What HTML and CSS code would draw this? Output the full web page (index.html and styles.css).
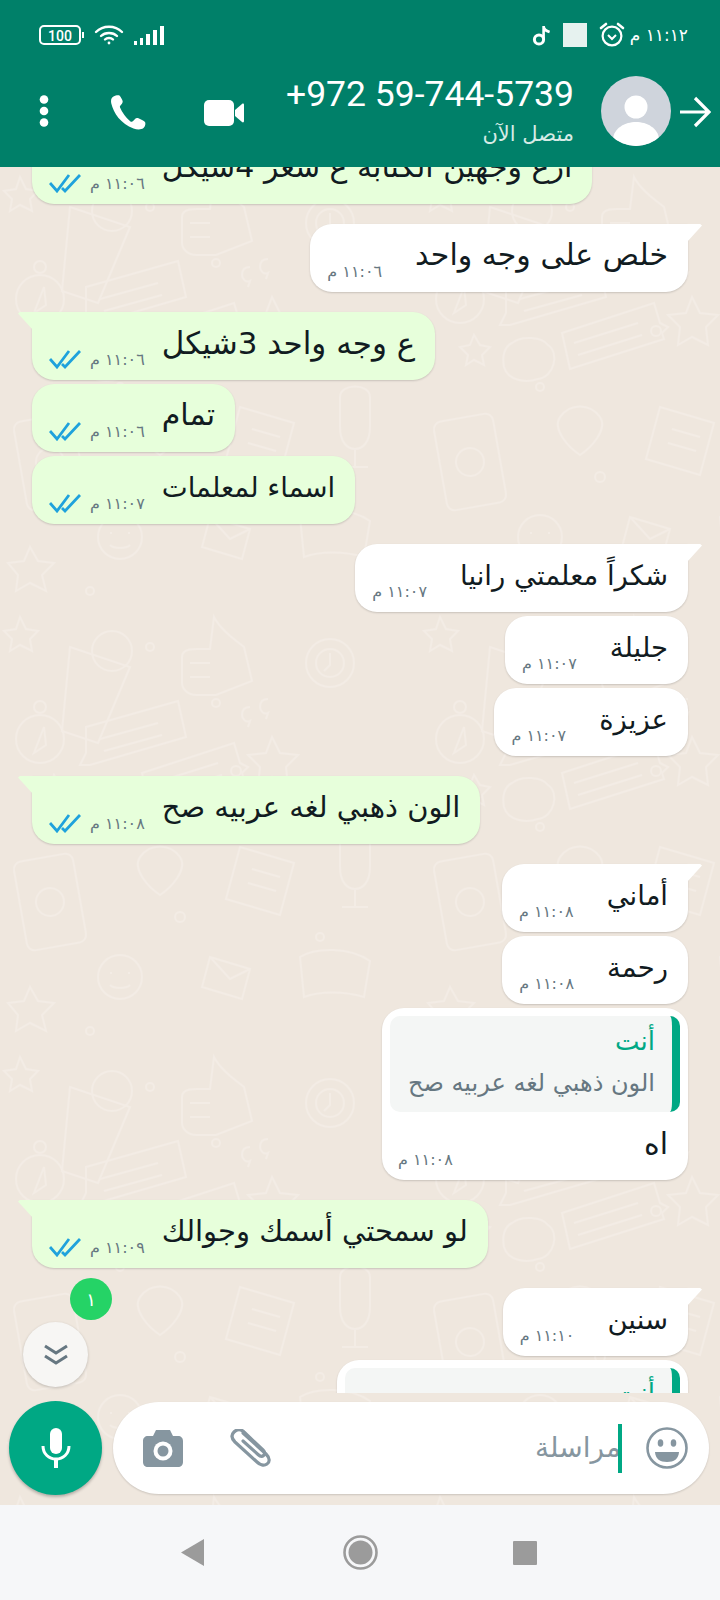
FILE: index.html
```html
<!DOCTYPE html>
<html lang="ar">
<head>
  <meta charset="UTF-8" />
  <meta name="viewport" content="width=device-width, initial-scale=1" />
  <title>WhatsApp chat</title>
  <link rel="stylesheet" href="styles.css">
</head>
<body>
  <div class="header">
    <div class="status-bar">
      <div class="status-left">
        <svg width="46" height="20" viewBox="0 0 46 20">
          <rect x="1" y="1" width="40" height="18" rx="4" fill="none" stroke="#fff" stroke-width="2" />
          <rect x="43" y="7" width="2" height="6" fill="#fff" />
          <text x="21" y="15.5" text-anchor="middle" class="battery-text">100</text>
        </svg>
        <svg width="30" height="21" viewBox="0 0 30 21" fill="none" stroke="#fff" stroke-width="2.4" stroke-linecap="round">
          <path d="M2 8c7-7 19-7 26 0" />
          <path d="M7 12c4-4 12-4 16 0" />
          <path d="M11 15.5c2-2 6-2 8 0" />
          <circle cx="15" cy="19" r="1.4" fill="#fff" stroke="none" />
        </svg>
        <svg class="icon-signal" width="30" height="20" viewBox="0 0 30 20" fill="#fff">
          <rect x="0" y="16" width="3" height="4" />
          <rect x="6" y="13" width="3" height="7" />
          <rect x="12" y="9" width="4" height="11" />
          <rect x="19" y="5" width="4" height="15" />
          <rect x="26" y="1" width="4" height="19" />
        </svg>
      </div>
      <div class="status-right">
        <svg width="19" height="22" viewBox="0 0 19 22" fill="none" stroke="#fff" stroke-width="3">
          <circle cx="7" cy="15.5" r="4.6" />
          <path d="M11.6 15V2c0 4 3 5 6 6" stroke-width="2.6" />
        </svg>
        <span class="status-square"></span>
        <svg width="26" height="25" viewBox="0 0 26 25" fill="none" stroke="#fff" stroke-width="2.2">
          <circle cx="13" cy="14" r="9.4" />
          <path d="M9 13l4 4 4-4" stroke-width="2" />
          <path d="M2 6l5-4M24 6l-5-4" stroke-linecap="round" stroke-width="2.6" />
        </svg>
        <span class="status-time" dir="rtl">١١:١٢ م</span>
      </div>
    </div>

    <div class="app-bar">
      <div class="app-actions">
        <svg class="icon-dots" width="12" height="32" viewBox="0 0 12 32" fill="#fff">
          <circle cx="6" cy="4.5" r="4.3" />
          <circle cx="6" cy="16" r="4.3" />
          <circle cx="6" cy="27.5" r="4.3" />
        </svg>
        <svg class="icon-phone" width="36" height="35" viewBox="0 0 36 35" fill="#fff">
          <path d="M3.500 1.500C1.500 2.500.5 5 1.300 8.500 3.500 18 11 29 23.500 33.500c3.500 1.200 7.500 1.500 10-.5 2-1.600 2.200-4.500 1.500-6-.4-1-4-2.800-6.500-3.800-1.500-.6-2.800-.2-3.700 1-.8 1-1.500 1.800-2.400 2.300-.7.400-1.500.3-2.200-.3C16 23 11.800 16.500 10 12.500c-.3-.9-.1-1.600.7-2.300 1-1 1.700-2 2-3.200.3-1.300-1.800-5-3-6.300C8.800-.3 5.500.3 3.500 1.500z" />
        </svg>
        <svg class="icon-video" width="40" height="26" viewBox="0 0 40 26" fill="#fff">
          <rect x="0" y="0" width="30" height="26" rx="5" />
          <path d="M31 10l7-6c1-.8 2-.3 2 1v16c0 1.300-1 1.800-2 1l-7-6z" />
        </svg>
      </div>
      <div class="contact">
        <div class="contact-name">+972 59-744-5739</div>
        <div class="contact-status" dir="rtl">متصل الآن</div>
      </div>
      <div class="avatar">
        <svg width="70" height="70" viewBox="0 0 70 70" fill="#fff">
          <circle cx="35" cy="31" r="11.500" />
          <path d="M12 63c1-11 12-17 23-17s22 6 23 17c-6 5-14 7-23 7s-17-2-23-7z" />
        </svg>
      </div>
      <svg class="icon-back" width="32" height="32" viewBox="0 0 32 32" fill="none" stroke="#fff" stroke-width="3.200">
        <path d="M1 16h29M16 2l14 14-14 14" />
      </svg>
    </div>
  </div>

  <div class="chat">
    <!-- faint doodle wallpaper -->
    <svg class="wallpaper" width="720" height="1338">
      <defs>
        <pattern id="doodles" width="420" height="440" patternUnits="userSpaceOnUse">
          <g fill="none" stroke="#f3ece5" stroke-width="2">
            <!-- glass and lemon -->
            <path d="M70 40l60 20-32 76-36-12z" />
            <circle cx="112" cy="44" r="20" />
            <!-- thumb -->
            <path d="M214 10c6 12 20 22 30 30l8 34-36 14h-20c-8 0-14-6-14-12V50c0-6 6-8 14-8h14z" />
            <path d="M190 56h20M190 70h20" />
            <!-- chat bubbles -->
            <path d="M86 110l92-26 8 36-96 28-10 0 6-12z" transform="translate(0 10)" />
            <path d="M100 122l58-16M104 134l58-16" transform="translate(0 10)" />
            <path d="M142 166l92-30 6 20 8 4-6 6 2 6-94 30z" />
            <path d="M154 176l64-20M158 188l64-20" />
            <!-- compass -->
            <circle cx="40" cy="132" r="24" />
            <circle cx="40" cy="100" r="6" />
            <path d="M44 120l-10 26 12-8z" />
            <!-- stars -->
            <path d="M272 130l8 16 18 2-12 12 2 18-16-8-14 8 2-18-12-12 18-2z" />
            <path d="M20 10l6 12 12 2-8 8 2 12-12-6-10 6 2-12-8-8 12-2z" />
            <path d="M54 168l6 10 10 2-8 8 2 10-10-5-8 5 2-10-8-8 10-2z" />
            <!-- cloud -->
            <path d="M92 176c10-8 30-6 36 2 12 8 6 32-10 34-12 4-30 2-34-12-2-10 0-20 8-24z" />
            <!-- clock -->
            <circle cx="330" cy="56" r="24" />
            <circle cx="330" cy="56" r="14" />
            <path d="M330 46v12l-6 6" />
            <!-- quotes and dots -->
            <path d="M250 100c-6 0-8 4-8 8s4 8 8 6l-2 6M268 92c-6 0-8 4-8 8s4 8 8 6l-2 6" />
            <circle cx="150" cy="40" r="4" />
            <circle cx="216" cy="96" r="4" />
            <circle cx="236" cy="164" r="5" />
            <circle cx="120" cy="220" r="4" />
            <!-- second row -->
            <rect x="20" y="250" width="60" height="90" rx="8" transform="rotate(-10 50 295)" />
            <circle cx="50" cy="295" r="14" transform="rotate(-10 50 295)" />
            <path d="M140 250c10-14 30-14 40 0 8 12-8 30-20 38-12-8-28-26-20-38z" />
            <path d="M240 240l54 16-14 52-54-16z" />
            <path d="M252 262l28 8M248 276l28 8" />
            <path d="M340 230c0-14 30-14 30 0v30c0 16-8 22-15 22s-15-6-15-22zM355 282v18M342 300h26" />
            <circle cx="120" cy="370" r="22" />
            <path d="M110 366h2M128 366h2M110 378c4 4 16 4 20 0" />
            <path d="M210 350l40 12-8 30-40-12zM210 350l20 22 20-10" />
            <path d="M300 350c16-10 50-10 70 4l-6 36c-20-6-44-6-60 0z" />
            <path d="M30 380l8 14 16 2-12 12 4 16-16-8-14 8 2-16-10-12 16-2z" />
            <circle cx="180" cy="310" r="5" />
            <circle cx="320" cy="330" r="4" />
            <circle cx="90" cy="424" r="4" />
          </g>
        </pattern>
      </defs>
      <rect width="720" height="1338" fill="url(#doodles)" />
    </svg>

    <div class="messages" dir="rtl">
      <div class="msg out msg-cut">
        <div class="msg-text">ارع وجهين الكتابه ع سعر 4شيكل</div>
        <div class="meta"><span>١١:٠٦ م</span><svg class="ticks" width="32" height="20" viewBox="0 0 32 20"><path d="M1 10l7 8L20 2M13 15l3 3L31 2" /></svg></div>
      </div>

      <div class="msg in tail group">
        <div class="msg-text">خلص على وجه واحد</div>
        <div class="meta"><span>١١:٠٦ م</span></div>
      </div>

      <div class="msg out tail group">
        <div class="msg-text large">ع وجه واحد 3شيكل</div>
        <div class="meta"><span>١١:٠٦ م</span><svg class="ticks" width="32" height="20" viewBox="0 0 32 20"><path d="M1 10l7 8L20 2M13 15l3 3L31 2" /></svg></div>
      </div>
      <div class="msg out">
        <div class="msg-text">تمام</div>
        <div class="meta"><span>١١:٠٦ م</span><svg class="ticks" width="32" height="20" viewBox="0 0 32 20"><path d="M1 10l7 8L20 2M13 15l3 3L31 2" /></svg></div>
      </div>
      <div class="msg out">
        <div class="msg-text small">اسماء لمعلمات</div>
        <div class="meta"><span>١١:٠٧ م</span><svg class="ticks" width="32" height="20" viewBox="0 0 32 20"><path d="M1 10l7 8L20 2M13 15l3 3L31 2" /></svg></div>
      </div>

      <div class="msg in tail group">
        <div class="msg-text small">شكراً معلمتي رانيا</div>
        <div class="meta"><span>١١:٠٧ م</span></div>
      </div>
      <div class="msg in">
        <div class="msg-text small">جليلة</div>
        <div class="meta"><span>١١:٠٧ م</span></div>
      </div>
      <div class="msg in">
        <div class="msg-text small">عزيزة</div>
        <div class="meta"><span>١١:٠٧ م</span></div>
      </div>

      <div class="msg out tail group">
        <div class="msg-text medium">الون ذهبي لغه عربيه صح</div>
        <div class="meta"><span>١١:٠٨ م</span><svg class="ticks" width="32" height="20" viewBox="0 0 32 20"><path d="M1 10l7 8L20 2M13 15l3 3L31 2" /></svg></div>
      </div>

      <div class="msg in tail group">
        <div class="msg-text small">أماني</div>
        <div class="meta"><span>١١:٠٨ م</span></div>
      </div>
      <div class="msg in">
        <div class="msg-text small">رحمة</div>
        <div class="meta"><span>١١:٠٨ م</span></div>
      </div>
      <div class="msg in msg-reply">
        <div class="quote">
          <div class="quote-name">أنت</div>
          <div class="quote-text">الون ذهبي لغه عربيه صح</div>
        </div>
        <div class="reply-text">اه</div>
        <div class="meta"><span>١١:٠٨ م</span></div>
      </div>

      <div class="msg out tail group">
        <div class="msg-text medium">لو سمحتي أسمك وجوالك</div>
        <div class="meta"><span>١١:٠٩ م</span><svg class="ticks" width="32" height="20" viewBox="0 0 32 20"><path d="M1 10l7 8L20 2M13 15l3 3L31 2" /></svg></div>
      </div>

      <div class="msg in tail group">
        <div class="msg-text small">سنين</div>
        <div class="meta"><span>١١:١٠ م</span></div>
      </div>
      <div class="msg in msg-reply msg-last">
        <div class="quote">
          <div class="quote-name">أنت</div>
        </div>
      </div>
    </div>

    <div class="unread-badge">١</div>
    <div class="scroll-btn">
      <svg width="24" height="21" viewBox="0 0 24 21" fill="none" stroke="#667781" stroke-width="3">
        <path d="M1 2l11 7 11-7M1 12l11 7 11-7" />
      </svg>
    </div>

    <div class="composer">
      <div class="mic-btn">
        <svg width="30" height="40" viewBox="0 0 30 40" fill="#fff">
          <rect x="9" y="0" width="12" height="26" rx="6" />
          <path d="M2 18c0 8 6 13 13 13s13-5 13-13" fill="none" stroke="#fff" stroke-width="3" />
          <rect x="13" y="30" width="4" height="10" />
        </svg>
      </div>
      <div class="input-box">
        <svg class="icon-camera" width="40" height="37" viewBox="0 0 40 37">
          <path fill="#8696a0" d="M13 0h14l3 6h5c3 0 5 2 5 5v21c0 3-2 5-5 5H5c-3 0-5-2-5-5V11c0-3 2-5 5-5h5z" />
          <circle cx="20" cy="21" r="9.500" fill="#fff" />
          <circle cx="20" cy="21" r="5.500" fill="#8696a0" />
        </svg>
        <svg class="icon-clip" width="42" height="38" viewBox="0 0 42 38" fill="none" stroke="#8696a0" stroke-width="3.200" stroke-linecap="round">
          <path d="M13 4L36 25c4 4 4 8 1 10s-7 1-10-2L5 13C1 9 1 6 4 3s7-3 10 0l19 18c2 2 2 4 .5 5.500s-3.500 1-5.500-1L13 12" />
        </svg>
        <div class="placeholder" dir="rtl">مراسلة</div>
        <span class="caret"></span>
        <svg class="icon-emoji" width="42" height="42" viewBox="0 0 42 42">
          <circle cx="21" cy="21" r="19.500" fill="none" stroke="#8696a0" stroke-width="2.600" />
          <ellipse cx="14.500" cy="16" rx="2.800" ry="3.800" fill="#8696a0" />
          <ellipse cx="27.500" cy="16" rx="2.800" ry="3.800" fill="#8696a0" />
          <path d="M9 25h24c-.5 7-5 10-12 10S9.500 32 9 25z" fill="#8696a0" />
        </svg>
      </div>
    </div>
  </div>

  <div class="nav-bar">
    <svg class="nav-back" width="23" height="27" viewBox="0 0 23 27" fill="#9b9b9b"><path d="M23 0v27L0 13.500z" /></svg>
    <svg width="35" height="35" viewBox="0 0 35 35">
      <circle cx="17.500" cy="17.500" r="16" fill="none" stroke="#9b9b9b" stroke-width="2.600" />
      <circle cx="17.500" cy="17.500" r="12" fill="#9b9b9b" />
    </svg>
    <svg width="24" height="24" viewBox="0 0 24 24" fill="#9b9b9b"><rect width="24" height="24" rx="1" /></svg>
  </div>
</body>
</html>
```

FILE: styles.css
```css
* {
  box-sizing: border-box;
}
body {
  margin: 0;
  width: 720px;
  height: 1600px;
  display: flex;
  flex-direction: column;
  overflow: hidden;
  font-family: "DejaVu Sans", sans-serif;
  background-color: #f6f7f9;
}

.header {
  position: relative;
  z-index: 2;
  height: 167px;
  flex-shrink: 0;
  background-color: #008069;
  color: white;
}
.status-bar {
  height: 68px;
  padding: 22px 32px 0 39px;
  display: flex;
  justify-content: space-between;
  align-items: flex-start;
}
.status-left {
  display: flex;
  align-items: center;
  gap: 9px;
  padding-top: 2px;
}
.icon-signal {
  margin-left: 1px;
}
.status-right {
  display: flex;
  align-items: center;
  gap: 12px;
}
.battery-text {
  font-family: "Roboto", sans-serif;
  font-size: 14px;
  font-weight: 500;
  fill: white;
}
.status-square {
  width: 24px;
  height: 24px;
  background-color: #e6f2ef;
}
.status-time {
  font-size: 17px;
  margin-left: -7px;
  width: 58px;
  white-space: nowrap;
}

.app-bar {
  display: flex;
  align-items: flex-start;
  padding: 8px 9px 0 38px;
}
.app-actions {
  display: flex;
  align-items: center;
  gap: 56px;
  padding-top: 19px;
}
.icon-dots {
  margin: -4px 4px 0 0;
}
.icon-video {
  margin-left: 2px;
}
.contact {
  margin-left: auto;
  text-align: right;
}
.contact-name {
  font-family: "Roboto", sans-serif;
  font-size: 35.5px;
  line-height: 38px;
  margin-top: -1px;
}
.contact-status {
  font-size: 21px;
  line-height: 26px;
  margin-top: 8px;
  color: #d6ebe6;
}
.avatar {
  width: 70px;
  height: 70px;
  margin-left: 27px;
  border-radius: 50%;
  background-color: #cfd4dc;
  overflow: hidden;
}
.avatar svg {
  display: block;
}
.icon-back {
  margin: 20px 0 0 8px;
}

.chat {
  position: relative;
  flex: 1;
  background-color: #efe7de;
  display: flex;
  flex-direction: column;
}
.wallpaper {
  position: absolute;
  top: 0;
  left: 0;
}

.messages {
  position: relative;
  height: 1226px;
  overflow: hidden;
  display: flex;
  flex-direction: column;
  align-items: flex-start;
  gap: 4px;
  padding: 0 32px;
}
.msg {
  position: relative;
  flex-shrink: 0;
  display: flex;
  height: 68px;
  padding: 12px 20px 0 17px;
  border-radius: 22px;
  box-shadow: 0 1px 2px rgba(0, 0, 0, 0.16);
}
.msg.group {
  margin-top: 16px;
}
.msg-cut {
  margin-top: -31px;
}
.msg.in {
  align-self: flex-start;
  background-color: white;
}
.msg.out {
  align-self: flex-end;
  background-color: #e7ffdb;
}
.msg-text {
  font-size: 30px;
  line-height: 38px;
  color: #111b21;
  white-space: nowrap;
}
.msg-text.large {
  font-size: 31px;
}
.msg-text.medium {
  font-size: 29px;
}
.msg-text.small {
  font-size: 27.5px;
}
.meta {
  display: flex;
  align-items: center;
  gap: 9px;
  height: 22px;
  margin: 24px 17px 0 0;
  font-size: 16px;
  color: #667781;
  white-space: nowrap;
}
.msg.in .meta {
  margin-right: 33px;
}
.ticks {
  fill: none;
  stroke: #1fa2dc;
  stroke-width: 2.8;
}

/* tails */
.msg.tail.in {
  border-top-right-radius: 0;
}
.msg.tail.out {
  border-top-left-radius: 0;
}
.msg.tail::before {
  content: "";
  position: absolute;
  top: 0;
  width: 15px;
  height: 18px;
  background-color: inherit;
}
.msg.tail.in::before {
  right: -14px;
  clip-path: polygon(0 0, 88% 0, 100% 8%, 0 100%);
}
.msg.tail.out::before {
  left: -14px;
  clip-path: polygon(100% 0, 12% 0, 0 8%, 100% 100%);
}

/* replies */
.msg-reply {
  display: block;
  width: 306px;
  height: 172px;
  padding: 8px 8px 0;
}
.msg-last {
  width: 351px;
  height: 110px;
}
.quote {
  height: 96px;
  border-right: 8px solid #00a884;
  border-radius: 10px;
  padding: 4px 17px 0 0;
  background-color: #f4f6f5;
}
.quote-name {
  font-size: 26px;
  line-height: 42px;
  color: #00a884;
}
.quote-text {
  font-size: 24px;
  line-height: 42px;
  color: #667781;
  white-space: nowrap;
}
.reply-text {
  font-size: 30px;
  line-height: 40px;
  color: #111b21;
  padding: 12px 12px 0 0;
}
.msg.in.msg-reply .meta {
  margin: -16px 0 0;
  padding-left: 8px;
  justify-content: flex-end;
}

.unread-badge {
  position: absolute;
  top: 1111px;
  left: 70px;
  width: 42px;
  height: 42px;
  border-radius: 50%;
  background-color: #25d366;
  color: white;
  font-size: 18px;
  display: flex;
  align-items: center;
  justify-content: center;
}
.scroll-btn {
  position: absolute;
  top: 1155px;
  left: 23px;
  width: 65px;
  height: 65px;
  border-radius: 50%;
  background-color: #f7f6f4;
  box-shadow: 0 1px 3px rgba(0, 0, 0, 0.2);
  display: flex;
  align-items: center;
  justify-content: center;
}

.composer {
  position: relative;
  display: flex;
  gap: 11px;
  padding: 8px 11px 0 9px;
}
.mic-btn {
  width: 93px;
  height: 94px;
  flex-shrink: 0;
  border-radius: 50%;
  background-color: #00a884;
  box-shadow: 0 2px 3px rgba(0, 0, 0, 0.25);
  display: flex;
  align-items: center;
  justify-content: center;
}
.input-box {
  flex: 1;
  height: 92px;
  margin-top: 1px;
  border-radius: 46px;
  background-color: white;
  box-shadow: 0 1px 2px rgba(0, 0, 0, 0.15);
  display: flex;
  align-items: center;
  padding: 0 21px 0 30px;
}
.icon-clip {
  margin-left: 47px;
}
.placeholder {
  margin-left: auto;
  font-size: 28px;
  line-height: 50px;
  color: #8696a0;
}
.caret {
  width: 4px;
  height: 49px;
  margin: 0 24px 0 -3px;
  background-color: #00a884;
}

.nav-bar {
  flex-shrink: 0;
  height: 95px;
  background-color: #f6f7f9;
  display: flex;
  justify-content: center;
  align-items: center;
  gap: 135px;
  padding-right: 3px;
}
.nav-back {
  margin-right: 4px;
}
```
